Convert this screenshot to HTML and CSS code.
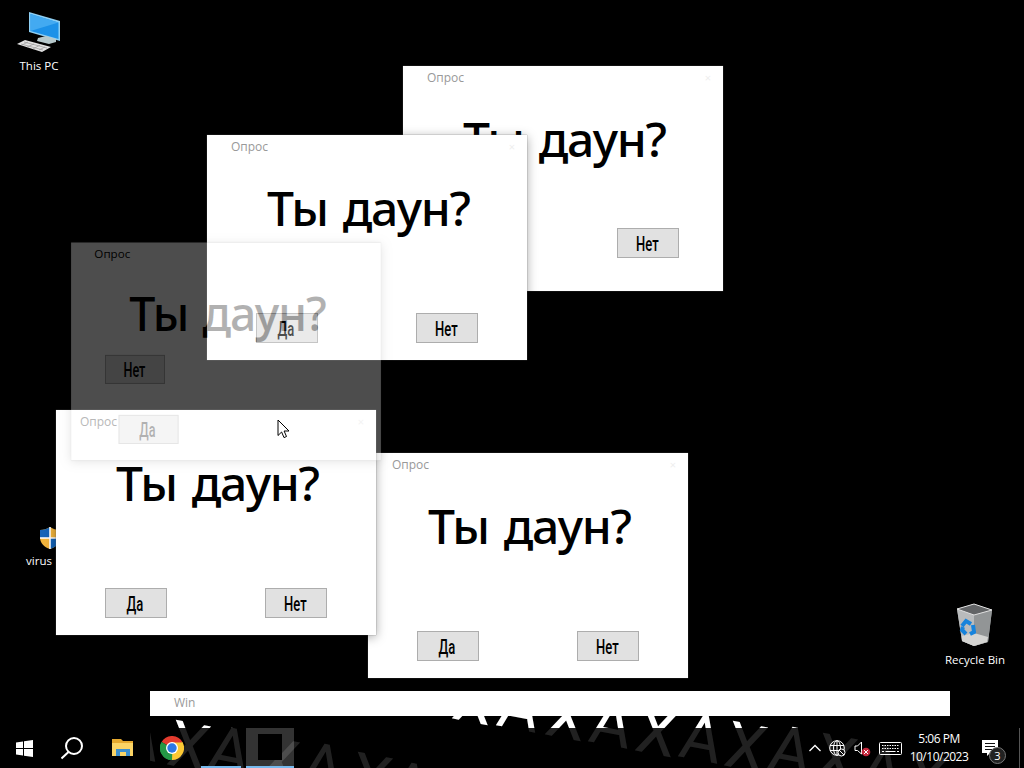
FILE: index.html
```html
<!DOCTYPE html>
<html lang="ru">
<head>
  <meta charset="UTF-8">
  <title>Desktop</title>
  <link rel="stylesheet" href="styles.css">
</head>
<body>
<div class="desktop">

  <!-- Desktop icons -->
  <div class="shortcut pc">
    <svg width="48" height="44" viewBox="0 0 48 44">
      <path d="M14 2l31 9v20L14 22z" fill="#8fd0f4"/>
      <path d="M15.500 4l28 8.500v16.500L15.500 21z" fill="#1c91e8"/>
      <path d="M15.500 4l28 8.500L15.500 21z" fill="#43aaf1"/>
      <path d="M23 28l8-2 10 3v3l-7 2-12-3z" fill="#b7c9cc"/>
      <path d="M2 34l8-4 26 7-9 5z" fill="#e4e4e4"/>
      <path d="M6 34l22 6M9 32l23 6M13 32l-6 3M19 34l-7 3M25 35l-7 4M30 37l-6 3" stroke="#999" stroke-width=".7"/>
    </svg>
    <span>This PC</span>
  </div>
  <div class="shortcut virus">
    <svg width="22" height="24" viewBox="0 0 22 24">
      <path d="M11 1c3 2 6 3 10 3v7c0 6-4 10-10 12C5 21 1 17 1 11V4c4 0 7-1 10-3z" fill="#f2b43c"/>
      <path d="M11 1v11H1V4c4 0 7-1 10-3zM11 12h10c-.3 6-4 9-10 11z" fill="#1463b8"/>
      <path d="M11 1v22M1 12h20" stroke="#fff" stroke-width="1.600"/>
    </svg>
    <span>virus</span>
  </div>
  <div class="shortcut bin">
    <svg width="42" height="44" viewBox="0 0 42 44">
      <path d="M3 6l17-5 18 6-4 32-14 4-12-5z" fill="#a6a9ab"/>
      <path d="M3 6l17 6v31L8 38z" fill="#b9bbbc"/>
      <path d="M20 12l18-5-4 32-14 4z" fill="#929596"/>
      <path d="M3 6l17-5 18 6-18 5z" fill="#626466" stroke="#e0e0e0"/>
      <path d="M8 33l12-3 14 4-1 5-13 4-12-5z" fill="#d4d4d2"/>
      <path d="M8 23l4-5 5 3M19 22l1 7-4 2M12 31l-4-4 1-3" fill="none" stroke="#1683dc" stroke-width="4"/>
    </svg>
    <span>Recycle Bin</span>
  </div>

  <!-- Poll windows, back to front -->
  <div class="window w1">
    <div class="titlebar"><span>Опрос</span><i>×</i></div>
    <h1>Ты даун?</h1>
    <div class="answers"><button><b>Нет</b></button></div>
  </div>
  <div class="window w2">
    <div class="titlebar"><span>Опрос</span><i>×</i></div>
    <h1>Ты даун?</h1>
    <div class="answers"><button><b>Да</b></button><button><b>Нет</b></button></div>
  </div>
  <div class="window w3">
    <div class="titlebar"><span>Опрос</span><i>×</i></div>
    <h1>Ты даун?</h1>
    <div class="answers"><button><b>Да</b></button><button><b>Нет</b></button></div>
  </div>
  <div class="window w4">
    <div class="titlebar"><span>Опрос</span><i>×</i></div>
    <h1>Ты даун?</h1>
    <div class="answers"><button><b>Да</b></button><button><b>Нет</b></button></div>
  </div>
  <div class="window fading">
    <div class="titlebar"><span>Опрос</span></div>
    <h1>Ты даун?</h1>
    <button class="no"><b>Нет</b></button>
    <button class="yes"><b>Да</b></button>
  </div>

  <!-- Win window, partly under the taskbar -->
  <div class="win">
    <div class="titlebar"><span>Win</span></div>
    <svg class="laugh" width="800" height="52" viewBox="150 716 800 52">
      <text rotate="11" x="115 165 205 254 298 347 385" y="754 764 769 780 785 796 804">АХАХАХА</text>
      <text rotate="11" x="450 495 543 587 633 677 722 766 812 857 902" y="718 725 734 741 750 756 765 768 777 787 796">ХАХАХАХАХАХ</text>
    </svg>
  </div>

  <div class="taskbar">
    <div class="apps">
      <div class="app">
        <svg width="17" height="17" viewBox="0 0 17 17"><path d="M0 2.500l7-1V8H0zM8 1.300L17 0v8H8zM0 9h7v6.500l-7-1zM8 9h9v8l-9-1.300z" fill="#fff"/></svg>
      </div>
      <div class="app">
        <svg width="24" height="24" viewBox="0 0 24 24" fill="none" stroke="#fff" stroke-width="2"><circle cx="13" cy="10" r="8"/><path d="M7.500 16L.5 22.500"/></svg>
      </div>
      <div class="app folder">
        <svg width="22" height="20" viewBox="0 0 22 20"><path d="M0 1h9l2 2h10v15H0z" fill="#e5a92f"/><path d="M0 5h21v13H0z" fill="#fbd465"/><path d="M4 18v-7h14v7h-4v-4H8v4z" fill="#3d8fcd"/></svg>
      </div>
      <div class="app chrome">
        <svg width="24" height="24" viewBox="0 0 24 24">
          <path d="M12 12L1.600 6A12 12 0 0 1 22.400 6z" fill="#e33b2e"/>
          <path d="M12 12L22.400 6A12 12 0 0 1 12 24z" fill="#fcc934"/>
          <path d="M12 12v12A12 12 0 0 1 1.600 6z" fill="#249846"/>
          <path d="M12 6.500h10.700L17 15l-5 9 1-6z" fill="#fcc934"/>
          <path d="M1.600 6l5.600 9 5 3L12 24A12 12 0 0 1 1.600 6z" fill="#249846"/>
          <circle cx="12" cy="12" r="6" fill="#fff"/><circle cx="12" cy="12" r="4.700" fill="#2c78e5"/>
        </svg>
      </div>
      <div class="app open"></div>
      <div class="app open active"><div class="thumb"></div></div>
    </div>
    <div class="tray">
      <svg width="12" height="8" viewBox="0 0 12 8" fill="none" stroke="#fff" stroke-width="1.300"><path d="M.5 7L6 1.500 11.500 7"/></svg>
      <svg width="17" height="17" viewBox="0 0 17 17" fill="none" stroke="#fff"><circle cx="8" cy="8" r="7.300"/><ellipse cx="8" cy="8" rx="3.500" ry="7.300"/><path d="M1 5.500h14M1 10.500h9M8 1v14"/><circle cx="12.500" cy="12.500" r="3.500" fill="#111"/><path d="M10 10l5 5"/></svg>
      <svg width="17" height="17" viewBox="0 0 17 17" fill="none" stroke="#fff"><path d="M1 6h2.500L7.500 2v12L3.500 10.500H1z"/><circle cx="12" cy="12" r="4.300" fill="#c5283d" stroke="none"/><path d="M10 10l4 4M14 10l-4 4"/></svg>
      <svg width="23" height="13" viewBox="0 0 23 13" fill="none" stroke="#fff"><rect x=".5" y=".5" width="22" height="12" rx="1"/><path d="M3 3.500h17M3 6.500h17" stroke-dasharray="1.500 1"/><path d="M3 9.500h2M6.500 9.500h10M18 9.500h2"/></svg>
      <div class="clock"><span>5:06 PM</span><span>10/10/2023</span></div>
      <div class="notes">
        <svg width="17" height="17" viewBox="0 0 17 17"><path d="M0 0h16v13H8l-3 3v-3H0z" fill="#fff"/><path d="M3 3.500h10M3 6.500h10M3 9.500h7" stroke="#111"/></svg>
        <span class="badge">3</span>
      </div>
    </div>
  </div>

  <svg class="cursor" width="13" height="20" viewBox="0 0 13 20"><path d="M1 1v15.500l3.600-3.500 2.400 5.600 2.500-1.100-2.400-5.500H12z" fill="#fff" stroke="#000"/></svg>
</div>
</body>
</html>
```
FILE: styles.css
```css
body {
  margin: 0;
  background: #000;
  font-family: "Open Sans", "Noto Sans", sans-serif;
}
.desktop {
  position: relative;
  width: 1024px;
  height: 768px;
  overflow: hidden;
  background: #000;
}
.desktop svg {
  display: block;
}

/* desktop icons */
.shortcut {
  position: absolute;
  width: 76px;
  display: flex;
  flex-direction: column;
  align-items: center;
  color: #fff;
  font-size: 11.5px;
  line-height: 16px;
  white-space: nowrap;
}
.pc {
  left: 1px;
  top: 10px;
}
.pc span {
  margin-top: 4px;
}
.virus {
  left: 1px;
  top: 526px;
}
.virus svg {
  margin-left: 21px;
}
.virus span {
  margin-top: 3px;
}
.bin {
  left: 937px;
  top: 603px;
}
.bin span {
  margin-top: 5px;
}

/* windows */
.window {
  position: absolute;
  width: 320px;
  height: 225px;
  background: #fff;
  box-shadow: 0 2px 10px rgba(0, 0, 0, 0.35), 0 0 1px #777;
}
.w1 { left: 403px; top: 66px; }
.w2 { left: 207px; top: 135px; }
.w3 { left: 368px; top: 453px; }
.w4 { left: 56px; top: 410px; }
.titlebar {
  display: flex;
  justify-content: space-between;
  height: 25px;
  padding: 0 12px 0 24px;
  color: #999;
  font-size: 12px;
  line-height: 24px;
}
.titlebar i {
  color: #eee;
  font-size: 11px;
  font-style: normal;
}
h1 {
  margin: 16px 0 0;
  padding-left: 60px;
  font: 500 48px/64px "Noto Sans", sans-serif;
  letter-spacing: -1.2px;
  word-spacing: 3.5px;
  color: #000;
  white-space: nowrap;
}
.answers {
  display: flex;
  justify-content: space-between;
  padding: 73px 49px 0;
}
.w1 .answers {
  justify-content: flex-end;
  padding: 57px 44px 0;
}
button {
  display: flex;
  align-items: center;
  justify-content: center;
  width: 62px;
  height: 30px;
  padding: 2px 2px 0 0;
  border: 1px solid #adadad;
  background: #e1e1e1;
  color: #000;
}
button b {
  font: 500 20px/26px Roboto, sans-serif;
  transform: scaleX(0.65);
}
.fading {
  left: 66px;
  top: 239px;
  transform: scale(0.968);
  opacity: 0.3;
}
.fading .titlebar {
  color: #000;
}
.fading button {
  position: absolute;
}
.no {
  left: 35px;
  top: 116px;
}
.yes {
  left: 49px;
  top: 178px;
}
.win {
  position: absolute;
  left: 150px;
  top: 691px;
  width: 800px;
  background: #fff;
}
.laugh {
  background: #000;
  fill: #fff;
  font: 64px Roboto, sans-serif;
}

/* taskbar */
.taskbar {
  position: absolute;
  left: 0;
  bottom: 0;
  width: 1019px;
  height: 40px;
  display: flex;
  justify-content: space-between;
  background: rgba(0, 0, 0, 0.87);
  border-right: 1px solid #555;
  color: #fff;
}
.apps {
  display: flex;
}
.app {
  box-sizing: border-box;
  display: flex;
  align-items: center;
  justify-content: center;
  width: 48px;
  height: 40px;
  margin-right: 1px;
}
.folder {
  padding-left: 2px;
}
.chrome {
  padding-left: 2px;
}
.open {
  width: 40px;
  margin: 0 5px;
  border-bottom: 2px solid #76b9ed;
}
.active {
  width: 48px;
  margin: 0;
  background: rgba(255, 255, 255, 0.2);
}
.thumb {
  width: 24px;
  height: 26px;
  background: #000;
}
.tray {
  display: flex;
  align-items: center;
  gap: 8px;
}
.clock {
  display: flex;
  flex-direction: column;
  align-items: center;
  width: 62px;
  margin-left: -2px;
  font-size: 12px;
  line-height: 18px;
  letter-spacing: -0.5px;
}
.notes {
  position: relative;
  margin: 0 20px 0 4px;
}
.badge {
  position: absolute;
  left: 7px;
  top: 7px;
  width: 15px;
  height: 15px;
  border: 1px solid #777;
  border-radius: 50%;
  background: #222;
  font-size: 11px;
  line-height: 15px;
  text-align: center;
}
.cursor {
  position: absolute;
  left: 277px;
  top: 419px;
}
```
